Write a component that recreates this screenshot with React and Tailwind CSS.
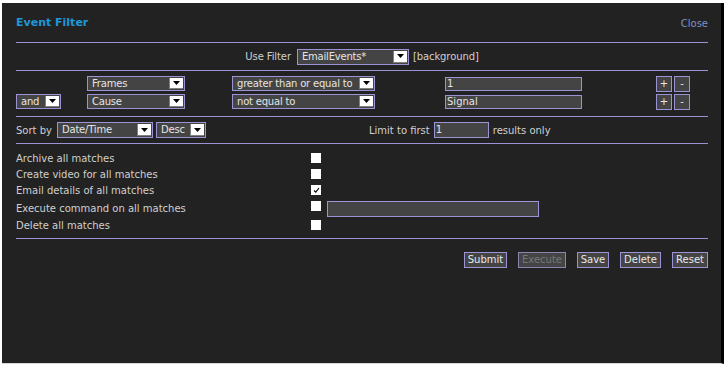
import React from "react";

const Arrow = () => (
  <div className="ml-auto h-full w-[14px] bg-white border-l border-b border-[#808080] flex items-center justify-center">
    <svg width="7" height="4" viewBox="0 0 7 4">
      <path d="M0 0H7L3.5 4Z" fill="#000" />
    </svg>
  </div>
);

const Select = ({ cls, children }) => (
  <div className={`${cls} flex items-center border border-[#9a94d4] bg-[#444] text-[#e4e4e4] p-px`}>
    <span className="pl-[3px] whitespace-nowrap leading-none tracking-[-0.2px]">{children}</span>
    <Arrow />
  </div>
);

const Input = ({ cls, value }) => (
  <div className={`${cls} flex items-center border border-[#9a94d4] bg-[#444] text-[#e4e4e4] pl-px leading-none`}>
    {value}
  </div>
);

const Box = ({ checked, cls = "" }) => (
  <div className={`${cls} w-[12px] h-[12px] bg-white border border-[#222] flex items-center justify-center`}>
    {checked && (
      <svg width="7" height="6" viewBox="0 0 7 6">
        <path d="M1 3.5L2.8 5.2L6 1" stroke="#000" strokeWidth="1.1" fill="none" />
      </svg>
    )}
  </div>
);

const Small = ({ children }) => (
  <div className="w-[16px] h-[16px] border border-[#9a94d4] bg-[#444] text-[#e8e8e8] flex items-center justify-center leading-none">
    {children}
  </div>
);

const Rule = () => <div className="h-px bg-[#9a94d4]" />;

const Button = ({ cls, children, disabled }) => (
  <div
    className={`${cls} h-[16px] flex items-center justify-center leading-none border ${
      disabled ? "border-[#8a86b0] text-[#777]" : "border-[#9a94d4] text-[#e8e8e8]"
    } bg-[#444]`}
  >
    {children}
  </div>
);

const actions = [
  "Archive all matches",
  "Create video for all matches",
  "Email details of all matches",
  "Execute command on all matches",
  "Delete all matches",
];

export default function App() {
  return (
    <div className="w-[725px] h-[368px] bg-white overflow-hidden font-['DejaVu_Sans',Verdana,sans-serif] text-[10px] text-[#d0d0d0]">
      <div className="ml-[2px] mt-[3px] w-[722px] h-[361px] bg-[#222] border-r-[3px] border-r-black border-b border-b-[#d8d8d8] pl-[14px] pr-[13px]">
        <div className="pt-[12px] h-[39px] flex items-start justify-between">
          <div className="h-[16px] flex items-center text-[11px] font-bold text-[#1e98d8]">Event Filter</div>
          <div className="h-[16px] flex items-center text-[#8090c4]">Close</div>
        </div>
        <Rule />

        <div className="h-[27px] flex items-center justify-center tracking-[-0.1px]">
          <span className="mr-[6px]">Use Filter</span>
          <Select cls="w-[112px] h-[16px]">EmailEvents*</Select>
          <span className="ml-[4px]">[background]</span>
        </div>
        <Rule />

        <div className="pt-[5px] pb-[7px] flex flex-col gap-[3px]">
          <div className="h-[15px] flex items-center">
            <div className="w-[71px]" />
            <div className="w-[145px]">
              <Select cls="w-[98px] h-[15px]">Frames</Select>
            </div>
            <div className="w-[213px]">
              <Select cls="w-[143px] h-[15px]">greater than or equal to</Select>
            </div>
            <div className="w-[211px]">
              <Input cls="w-[137px] h-[14px]" value="1" />
            </div>
            <Small>+</Small>
            <div className="ml-[2px]">
              <Small>-</Small>
            </div>
          </div>
          <div className="h-[15px] flex items-center">
            <div className="w-[71px]">
              <Select cls="w-[45px] h-[15px]">and</Select>
            </div>
            <div className="w-[145px]">
              <Select cls="w-[98px] h-[15px]">Cause</Select>
            </div>
            <div className="w-[213px]">
              <Select cls="w-[143px] h-[15px]">not equal to</Select>
            </div>
            <div className="w-[211px]">
              <Input cls="w-[137px] h-[14px]" value="Signal" />
            </div>
            <Small>+</Small>
            <div className="ml-[2px]">
              <Small>-</Small>
            </div>
          </div>
        </div>
        <Rule />

        <div className="h-[26px] flex items-center">
          <div className="w-[353px] flex items-center">
            <span className="mr-[5px]">Sort by</span>
            <Select cls="w-[96px] h-[16px]">Date/Time</Select>
            <div className="ml-[3px]">
              <Select cls="w-[50px] h-[16px]">Desc</Select>
            </div>
          </div>
          <span className="mr-[4px]">Limit to first</span>
          <Input cls="w-[55px] h-[16px]" value="1" />
          <span className="ml-[4px]">results only</span>
        </div>
        <Rule />

        <div className="pt-[6px] pb-[5px]">
          {actions.map((label, i) => (
            <div
              key={label}
              className={`flex ${i === 3 ? "h-[18px] items-start" : i === 2 ? "h-[17px] items-center" : "h-[16px] items-center"}`}
            >
              <div className={`w-[294px] ${i === 3 ? "h-[18px] flex items-center" : ""}`}>{label}</div>
              {i === 3 ? (
                <>
                  <Box cls="mt-px" />
                  <Input cls="ml-[5px] mt-[2px] w-[212px] h-[16px]" value="" />
                </>
              ) : (
                <Box checked={i === 2} cls="-mt-px" />
              )}
            </div>
          ))}
        </div>
        <Rule />

        <div className="pt-[13px] flex justify-end gap-[11px]">
          <Button cls="w-[43px]">Submit</Button>
          <Button cls="w-[48px]" disabled>
            Execute
          </Button>
          <Button cls="w-[32px]">Save</Button>
          <Button cls="w-[41px]">Delete</Button>
          <Button cls="w-[36px]">Reset</Button>
        </div>
      </div>
    </div>
  );
}
